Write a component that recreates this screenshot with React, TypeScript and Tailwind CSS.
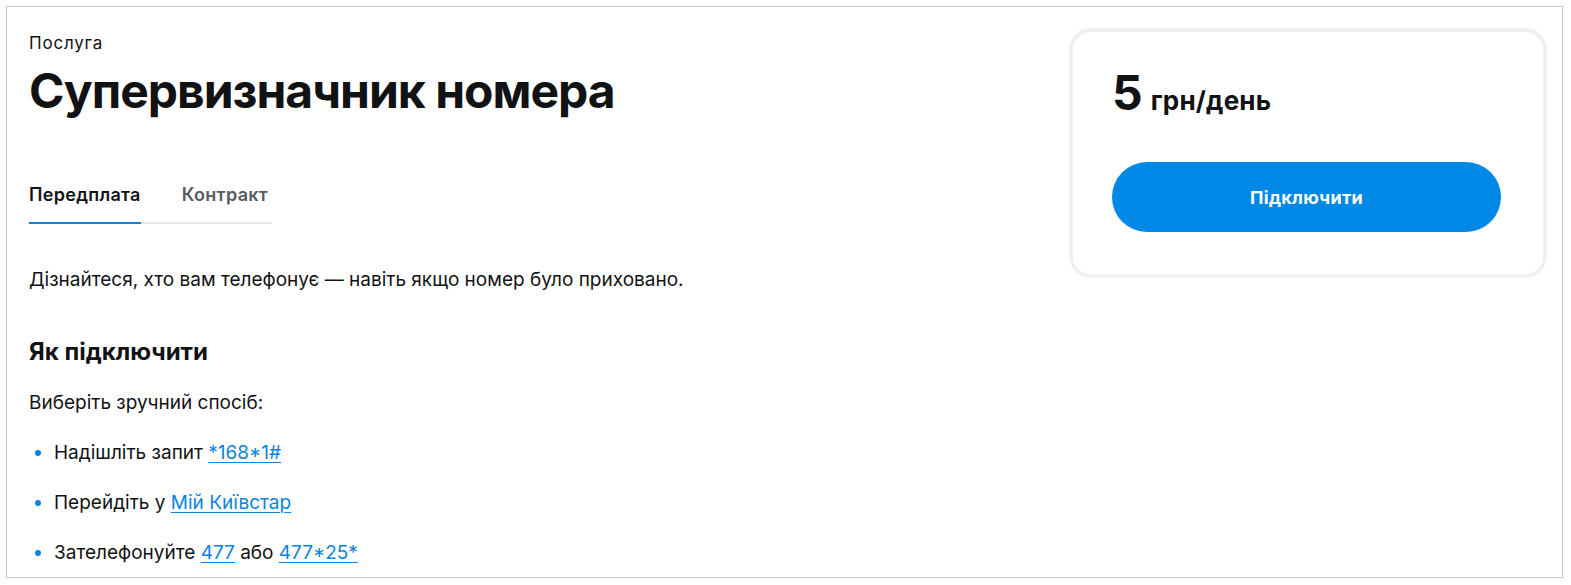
import React, { useState } from "react";

const links = "text-[#0a84e0] underline underline-offset-[3px] decoration-1";

export default function App() {
  const [tab, setTab] = useState("prepaid");

  return (
    <div
      className="ml-[6px] mt-[6px] w-[1557px] h-[572px] border border-[#c8c8c8] bg-white text-[#111214] overflow-hidden"
      style={{ fontFamily: 'Inter, "Noto Sans", sans-serif' }}
    >
      <div className="flex justify-between pl-[22px] pr-[15px] pt-[21px]">
        {/* Left column: service description */}
        <div className="flex flex-col">
          <div className="mt-[3px] text-[17px] leading-[24px] tracking-[0.8px]">Послуга</div>
          <h1 className="mt-[8px] text-[48px] leading-[56px] font-bold tracking-[-1px]">
            Супервизначник номера
          </h1>

          <div className="mt-[64px] flex w-[243px] border-b-2 border-[#e4e5e8]">
            <button
              onClick={() => setTab("prepaid")}
              className={
                "-mb-[2px] pb-[15px] text-[18px] leading-[24px] font-semibold tracking-[0.3px] border-b-2 " +
                (tab === "prepaid"
                  ? "border-[#0a84e0] text-[#111214]"
                  : "border-transparent text-[#555a63]")
              }
            >
              Передплата
            </button>
            <button
              onClick={() => setTab("contract")}
              className={
                "-mb-[2px] ml-[41px] pb-[15px] text-[18px] leading-[24px] font-semibold tracking-[0.3px] border-b-2 " +
                (tab === "contract"
                  ? "border-[#0a84e0] text-[#111214]"
                  : "border-transparent text-[#555a63]")
              }
            >
              Контракт
            </button>
          </div>

          <p className="mt-[42px] text-[19px] leading-[28px]">
            Дізнайтеся, хто вам телефонує — навіть якщо номер було приховано.
          </p>

          <h2 className="mt-[42px] text-[24px] leading-[32px] font-bold">Як підключити</h2>

          <p className="mt-[21px] text-[19px] leading-[28px]">Виберіть зручний спосіб:</p>

          <ul className="mt-[22px] flex flex-col gap-[22px] text-[19px] leading-[28px]">
            <li className="flex items-center">
              <span className="ml-[6px] mr-[13px] h-[6px] w-[6px] rounded-full bg-[#0a84e0]" />
              <span>
                Надішліть запит <a className={links} href="#">*168*1#</a>
              </span>
            </li>
            <li className="flex items-center">
              <span className="ml-[6px] mr-[13px] h-[6px] w-[6px] rounded-full bg-[#0a84e0]" />
              <span>
                Перейдіть у <a className={links} href="#">Мій Київстар</a>
              </span>
            </li>
            <li className="flex items-center">
              <span className="ml-[6px] mr-[13px] h-[6px] w-[6px] rounded-full bg-[#0a84e0]" />
              <span>
                Зателефонуйте <a className={links} href="#">477</a> або{" "}
                <a className={links} href="#">477*25*</a>
              </span>
            </li>
          </ul>
        </div>

        {/* Right column: price card */}
        <div className="w-[478px] h-[250px] rounded-[22px] border-4 border-[#eff0f2] px-[39px] pt-[33px]">
          <div className="flex items-baseline gap-[8px]">
            <span className="text-[48px] leading-[56px] font-bold">5</span>
            <span className="text-[26px] leading-[32px] font-bold tracking-[0.2px]">грн/день</span>
          </div>
          <button className="mt-[41px] w-[389px] h-[70px] rounded-full bg-[#0088e6] text-white text-[18px] font-bold tracking-[0.3px]">
            Підключити
          </button>
        </div>
      </div>
    </div>
  );
}
